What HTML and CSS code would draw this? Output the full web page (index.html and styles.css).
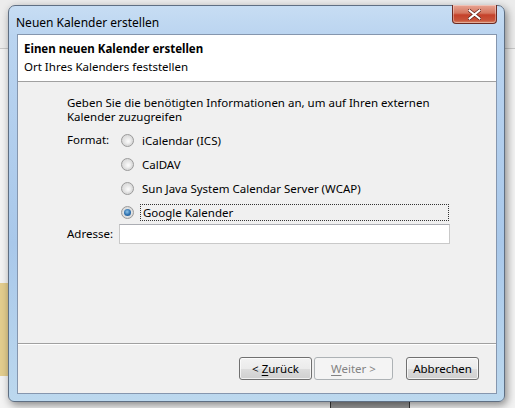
FILE: index.html
```html
<!DOCTYPE html>
<html lang="de">
<head>
<meta charset="utf-8">
<title>Neuen Kalender erstellen</title>
<link rel="stylesheet" href="styles.css">
</head>
<body>
<div class="desktop">
  <div class="window">
    <div class="titlebar">
      <span class="title">Neuen Kalender erstellen</span>
      <div class="close">
        <svg width="13" height="11" viewBox="0 0 13 11"><path d="M1.5 1.5 L11.5 9.5 M11.5 1.5 L1.5 9.5" stroke="#5a1a12" stroke-width="3.4" stroke-linecap="square"/><path d="M1.5 1.5 L11.5 9.5 M11.5 1.5 L1.5 9.5" stroke="#ffffff" stroke-width="2" stroke-linecap="square"/></svg>
      </div>
    </div>
    <div class="client">
      <div class="header">
        <div class="h-title">Einen neuen Kalender erstellen</div>
        <div class="h-sub">Ort Ihres Kalenders feststellen</div>
      </div>
      <div class="body">
        <p class="intro">Geben Sie die benötigten Informationen an, um auf Ihren externen Kalender zuzugreifen</p>
        <div class="form">
          <div class="lbl lbl-format">Format:</div>
          <div class="options">
            <div class="opt"><span class="radio"></span><span class="opt-text">iCalendar (ICS)</span></div>
            <div class="opt"><span class="radio"></span><span class="opt-text">CalDAV</span></div>
            <div class="opt"><span class="radio"></span><span class="opt-text">Sun Java System Calendar Server (WCAP)</span></div>
            <div class="opt"><span class="radio checked"></span><span class="opt-text focus">Google Kalender</span></div>
          </div>
          <div class="lbl lbl-addr">Adresse:</div>
          <div class="input"></div>
        </div>
      </div>
      <div class="footer">
        <button class="btn"><span>&lt; <u>Z</u>urück</span></button>
        <button class="btn disabled"><span><u>W</u>eiter &gt;</span></button>
        <button class="btn cancel"><span>Abbrechen</span></button>
      </div>
    </div>
  </div>
</div>
</body>
</html>
```
FILE: styles.css
```css
* { box-sizing: border-box; }
html, body { margin: 0; padding: 0; }
body {
  width: 515px;
  height: 408px;
  overflow: hidden;
  font-family: "Noto Sans", "Open Sans", sans-serif;
  font-size: 11.5px;
  color: #000;
}
.desktop {
  width: 515px;
  height: 408px;
  padding: 5px 0 0 8px;
  background:
    linear-gradient(to bottom, transparent 0, transparent 283px, #e3cd8e 283px, #e3cd8e 376px, transparent 376px) left top / 10px 408px no-repeat,
    linear-gradient(to right, transparent 0, transparent 330px, #3a3a3a 330px, #3a3a3a 331px, #9a9a9a 331px, #9a9a9a 409px, #3a3a3a 409px, #3a3a3a 410px, transparent 410px) left 402px / 515px 6px no-repeat,
    linear-gradient(to bottom, #ececec 0, #ececec 48px, #c8c8c8 48px, #c8c8c8 49px, #f3f3f3 49px, #f3f3f3 100%);
}
.window {
  width: 497px;
  height: 397px;
  display: flex;
  flex-direction: column;
  padding: 0 7px 7px 8px;
  border-radius: 7px 7px 6px 6px;
  border: 1px solid #5f6f83;
  background: linear-gradient(to bottom, #c7ddf3 0, #bad4f0 30px, #a9c8ea 60%, #bcd8ee 100%);
  box-shadow: 2px 3px 8px rgba(0,0,0,0.45);
}
.titlebar {
  height: 28px;
  display: flex;
  align-items: flex-start;
  justify-content: space-between;
  flex: none;
}
.title {
  padding: 8px 0 0 0;
  margin-left: -1px;
  font-size: 12px;
  color: #000;
}
.close {
  width: 45px;
  height: 19px;
  margin-right: 0;
  margin-top: -1px;
  border: 1px solid #6b2a22;
  border-top: none;
  border-radius: 0 0 4px 4px;
  background: linear-gradient(to bottom, #e8a493 0, #d4765f 45%, #c5412a 55%, #c8543a 85%, #d98a6a 100%);
  display: flex;
  align-items: center;
  justify-content: center;
  box-shadow: inset 0 0 0 1px rgba(255,255,255,0.35);
}
.client {
  flex: 1;
  display: flex;
  flex-direction: column;
  background: #f0f0f0;
  border: 1px solid #8596ae;
}
.header {
  height: 47px;
  flex: none;
  background: #fff;
  border-bottom: 1px solid #a0a0a0;
  padding: 5px 0 0 6px;
  line-height: 18px;
}
.h-title { font-weight: bold; }
.body {
  flex: 1;
  padding: 14px 0 0 49px;
}
.intro {
  margin: 0;
  width: 372px;
  line-height: 14px;
}
.form {
  margin-top: 4px;
  display: grid;
  grid-template-columns: 52px 331px;
  align-items: start;
}
.lbl { line-height: 16px; }
.lbl-format { padding-top: 4px; }
.lbl-addr { padding-top: 2px; }
.options { display: flex; flex-direction: column; }
.opt {
  height: 24px;
  display: flex;
  align-items: center;
  padding-left: 2px;
}
.radio {
  width: 13px;
  height: 13px;
  border-radius: 50%;
  border: 1px solid #9a9a9a;
  background: radial-gradient(circle at 50% 50%, #f4f4f4 0, #e0e0e0 55%, #cfcfcf 100%);
  margin-right: 6px;
  flex: none;
  position: relative;
}
.radio::after {
  content: "";
  position: absolute;
  inset: 2px;
  border-radius: 50%;
  background: radial-gradient(circle at 60% 60%, #fdfdfd 0, #d8d8d8 100%);
}
.radio.checked::after {
  inset: 2px;
  background: radial-gradient(circle at 45% 40%, #8ec4ea 0, #2c6fae 55%, #1b4f86 100%);
}
.opt-text {
  padding: 1px 2px;
  line-height: 15px;
}
.opt-text.focus {
  flex: 1;
  outline: 1px dotted #333;
  outline-offset: -1px;
  margin-right: 1px;
  padding: 1px 3px;
}
.input {
  height: 20px;
  margin-top: 0;
  background: #fff;
  border: 1px solid #c9c9c9;
  border-top-color: #abadb3;
}
.footer {
  height: 50px;
  flex: none;
  border-top: 1px solid #a0a0a0;
  box-shadow: inset 0 1px 0 #fff;
  display: flex;
  justify-content: flex-end;
  align-items: flex-start;
  padding: 13px 17px 0 0;
  gap: 2px;
}
.btn {
  width: 73px;
  height: 23px;
  padding: 0;
  font: inherit;
  color: #000;
  border: 1px solid #707070;
  border-radius: 3px;
  background: linear-gradient(to bottom, #f2f2f2 0, #ebebeb 50%, #dddddd 50%, #cfcfcf 100%);
  box-shadow: inset 0 0 0 1px rgba(255,255,255,0.7);
}
.btn.disabled {
  width: 79px;
  border-color: #adb2b5;
  background: #f4f4f4;
  color: #838383;
  box-shadow: none;
}
.btn.cancel { margin-left: 11px; }
u { text-decoration: underline; text-underline-offset: 2px; }
```
